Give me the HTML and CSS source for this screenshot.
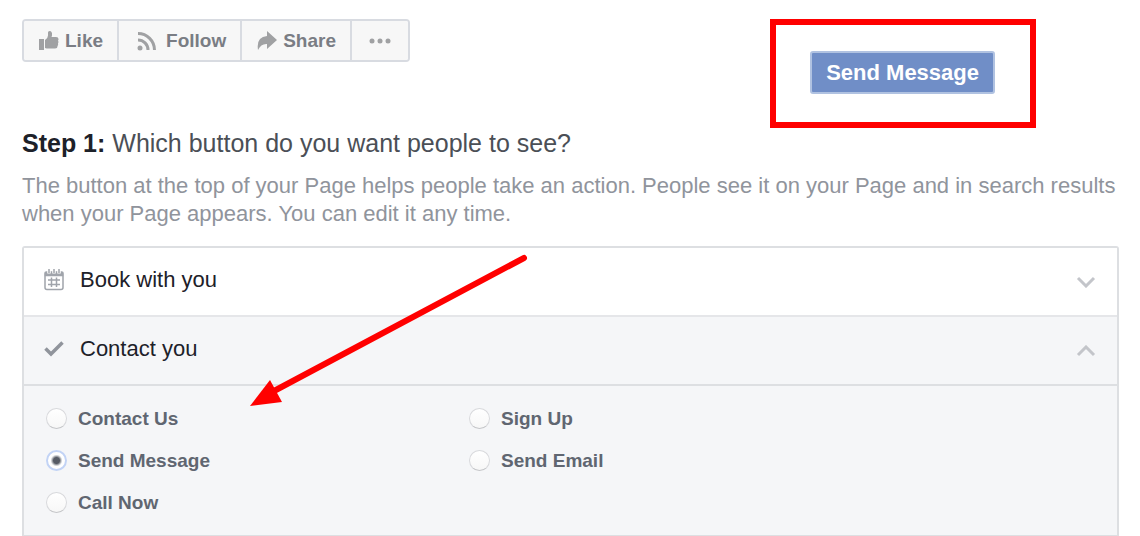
FILE: index.html
```html
<!DOCTYPE html>
<html lang="en">
<head>
    <meta charset="UTF-8">
    <meta name="viewport" content="width=device-width, initial-scale=1.0">
    <title>Add a button to your Page</title>
    <link rel="stylesheet" href="styles.css">
</head>
<body>
    <header class="page-header">
        <div class="toolbar">
            <button type="button">
                <svg width="20" height="20" viewBox="0 0 20 20" fill="#a0a1a3"><path d="M0 8h5v11H0zM6 9Q9 7 9 4.500V1.500Q9 0 10.500 0 13.500 0 13 4.500L12.500 6H17q2.500 0 2.500 2 0 1-.5 1.500 1 1.500 0 3 .5 1.500-.5 2.500 0 2.500-2.500 2.500H9Q7.500 17.500 6 17z"/></svg>
                Like
            </button>
            <button type="button" class="follow">
                <svg width="20" height="20" viewBox="0 0 20 20" fill="none" stroke="#a0a1a3" stroke-width="3"><circle cx="3" cy="17" r="2.500" fill="#a0a1a3" stroke="none"/><path d="M1 9A10 10 0 0 1 11 19M1 2.500A16.500 16.500 0 0 1 17.500 19"/></svg>
                Follow
            </button>
            <button type="button">
                <svg width="20" height="20" viewBox="0 0 20 20" fill="#a0a1a3"><path d="M10 0 20 9 10 18v-5Q4 12.500 1 19 -1 6 10 5z"/></svg>
                Share
            </button>
            <button type="button" class="more" aria-label="More">
                <svg width="22" height="6" viewBox="0 0 22 6" fill="#a0a1a3"><circle cx="3" cy="3" r="2.500"/><circle cx="11" cy="3" r="2.500"/><circle cx="19" cy="3" r="2.500"/></svg>
            </button>
        </div>
        <div class="highlight">
            <button type="button" class="cta">Send Message</button>
        </div>
    </header>

    <main>
        <h1><strong>Step 1:</strong> Which button do you want people to see?</h1>
        <p class="description">The button at the top of your Page helps people take an action. People see it on your Page and in search results when your Page appears. You can edit it any time.</p>

        <div class="accordion">
            <button type="button" class="section" aria-expanded="false">
                <svg width="20" height="24" viewBox="0 0 20 24" fill="none" stroke="#a0a4ab" stroke-width="1.500"><rect x="1" y="4" width="18" height="17.500" rx="2"/><path d="M1.500 4.500h17v3h-17z" fill="#a0a4ab"/><path d="M5 0v5.500M10 0v5.500M15 0v5.500" stroke="#fff" stroke-width="3.500"/><path d="M5 1v4M10 1v4M15 1v4M4 12h12M4 16.500h12M7.500 9.500v9.500M12.500 9.500v9.500"/></svg>
                <span>Book with you</span>
                <svg class="chevron" width="20" height="12" viewBox="0 0 20 12"><path d="m2 2 8 8 8-8"/></svg>
            </button>
            <button type="button" class="section open" aria-expanded="true">
                <svg width="20" height="24" viewBox="0 0 20 24" fill="none" stroke="#90949c" stroke-width="3.500"><path d="M1.500 11.500 7 17 18.500 5.500"/></svg>
                <span>Contact you</span>
                <svg class="chevron" width="20" height="12" viewBox="0 0 20 12"><path d="m2 10 8-8 8 8"/></svg>
            </button>
            <div class="options">
                <label><input type="radio" name="action"> Contact Us</label>
                <label><input type="radio" name="action" checked> Send Message</label>
                <label><input type="radio" name="action"> Call Now</label>
                <label><input type="radio" name="action"> Sign Up</label>
                <label><input type="radio" name="action"> Send Email</label>
            </div>

            <!-- Arrow pointing at the contact options -->
            <svg class="arrow" width="280" height="152" viewBox="0 0 280 152"><path d="M274 4 24 137" stroke="#f00" stroke-width="6" stroke-linecap="round"/><path d="M0 152 20 126 32 148z" fill="#f00"/></svg>
        </div>
    </main>
</body>
</html>
```
FILE: styles.css
```css
* {
    box-sizing: border-box;
}
body {
    font-family: "Liberation Sans", Arial, Helvetica, sans-serif;
    background-color: #fff;
    color: #1d2129;
    margin: 0;
    padding: 19px 21px 0 22px;
}
button {
    font-family: inherit;
    cursor: pointer;
}
.page-header {
    display: flex;
    justify-content: space-between;
    align-items: flex-start;
}
.toolbar {
    display: flex;
    border: 2px solid #d8dbe1;
    border-radius: 4px;
    overflow: hidden;
}
.toolbar button {
    display: flex;
    align-items: center;
    gap: 6px;
    height: 39px;
    padding: 0 14px 0 15px;
    border: 0;
    border-right: 2px solid #d8dbe1;
    background-color: #f7f7f7;
    color: #7a7d84;
    font-size: 19px;
    font-weight: bold;
}
.toolbar .follow {
    gap: 9px;
    padding-left: 18px;
}
.toolbar .more {
    padding: 0 17px;
    border-right: 0;
}
.highlight {
    border: 6px solid #f00;
    padding: 26px 35px 28px 34px;
    margin-right: 83px;
}
.cta {
    display: block;
    height: 43px;
    padding: 0 14px;
    border: 2px solid #b0c2e1;
    border-radius: 3px;
    background-color: #708ec7;
    color: #fff;
    font-size: 22px;
    font-weight: bold;
}
h1 {
    margin: 0 0 14px;
    color: #4b4f56;
    font-size: 25px;
    font-weight: normal;
    line-height: 30px;
}
h1 strong {
    color: #1d2129;
}
.description {
    margin: 0 0 18px;
    color: #90949c;
    font-size: 22px;
    line-height: 28px;
}
.accordion {
    position: relative;
    border: 2px solid #dddfe2;
    border-bottom-width: 1px;
    border-radius: 3px 3px 0 0;
}
.section {
    display: flex;
    align-items: center;
    gap: 16px;
    width: 100%;
    height: 69px;
    padding: 0 21px 4px 20px;
    border: 0;
    border-bottom: 2px solid #e5e6e9;
    background-color: #fff;
    color: #1d2129;
    font-size: 22px;
    text-align: left;
}
.section.open {
    border-bottom-color: #dddfe2;
    background-color: #f5f6f8;
}
.chevron {
    margin: 4px 0 0 auto;
    fill: none;
    stroke: #c3c5ca;
    stroke-width: 3;
}
.options {
    display: grid;
    grid-template-rows: repeat(3, 21px);
    grid-template-columns: 423px 1fr;
    grid-auto-flow: column;
    row-gap: 21px;
    padding: 22px;
    background-color: #f5f6f8;
    color: #606671;
    font-size: 19px;
    font-weight: bold;
}
.options label {
    display: flex;
    align-items: center;
    gap: 11px;
}
.options input {
    appearance: none;
    width: 21px;
    height: 21px;
    margin: 0;
    border: 1px solid #d8d9dc;
    border-bottom-color: #c4c5c8;
    border-radius: 50%;
    background: linear-gradient(#fff, #f7f7f7);
}
.options input:checked {
    border: 2px solid #c2d3f5;
    background: radial-gradient(circle, #565b65 3px, #d0d2d5 5px, #fff 6px);
}
.arrow {
    position: absolute;
    top: 6px;
    left: 226px;
    pointer-events: none;
}
```
